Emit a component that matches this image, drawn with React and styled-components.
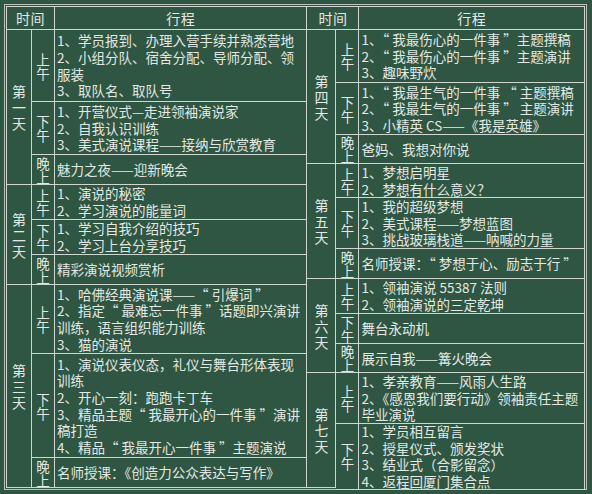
import React from 'react';
import styled, { createGlobalStyle } from 'styled-components';

const LINE = '#cfd6cf';
const INK = '#e3e8e2';

const GlobalStyle = createGlobalStyle`
  html, body {
    margin: 0;
    padding: 0;
    background: #2f5642;
  }
  body {
    font-family: "Noto Sans CJK SC", "Noto Sans", sans-serif;
    color: ${INK};
  }
`;

const Board = styled.div`
  width: 592px;
  height: 494px;
  box-sizing: border-box;
  padding: 4px 0 0 4px;
  background: #2f5642;
`;

const Frame = styled.div`
  display: flex;
  width: 583px;
  box-sizing: border-box;
  border: 1px solid #b9c3ba;
  padding: 1px;
`;

const Table = styled.div`
  display: flex;
  flex-direction: column;
  width: ${(p) => p.$width}px;
  border-top: 1px solid ${LINE};
  border-left: ${(p) => (p.$first ? `1px solid ${LINE}` : 'none')};
`;

const HeaderRow = styled.div`
  display: grid;
  grid-template-columns: ${(p) => p.$time}px 1fr;
  height: 23px;
`;

const HeaderCell = styled.div`
  display: flex;
  align-items: center;
  justify-content: center;
  box-sizing: border-box;
  border-right: 1px solid ${LINE};
  border-bottom: 1px solid ${LINE};
  font-size: 14px;
  line-height: 16px;
  letter-spacing: 0.5px;
`;

const DayBlock = styled.div`
  display: grid;
  grid-template-columns: ${(p) => p.$day}px 1fr;
`;

const DayCell = styled.div`
  display: flex;
  align-items: center;
  justify-content: center;
  box-sizing: border-box;
  border-right: 1px solid ${LINE};
  border-bottom: 1px solid ${LINE};
`;

const Vertical = styled.span`
  display: block;
  width: 1em;
  font-size: ${(p) => p.$size}px;
  line-height: ${(p) => p.$lh}px;
  text-align: center;
  word-break: break-all;
`;

const Periods = styled.div`
  display: flex;
  flex-direction: column;
`;

const PeriodRow = styled.div`
  display: grid;
  grid-template-columns: 23px 1fr;
  height: ${(p) => p.$h}px;
`;

const LabelCell = styled(DayCell)``;

const ContentCell = styled.div`
  display: flex;
  flex-direction: column;
  justify-content: center;
  box-sizing: border-box;
  padding: 0 0 0 2px;
  border-right: 1px solid ${LINE};
  border-bottom: 1px solid ${LINE};
  font-size: 13.5px;
  line-height: 16.6px;
`;

const Line = styled.div`
  white-space: pre;
`;

const left = [
  {
    day: '第一天',
    periods: [
      { label: '上午', h: 72, lines: ['1、学员报到、办理入营手续并熟悉营地', '2、小组分队、宿舍分配、导师分配、领\n服装', '3、取队名、取队号'] },
      { label: '下午', h: 53, lines: ['1、开营仪式—走进领袖演说家', '2、自我认识训练', '3、美式演说课程——接纳与欣赏教育'] },
      { label: '晚上', h: 30, lines: ['魅力之夜——迎新晚会'] },
    ],
  },
  {
    day: '第二天',
    periods: [
      { label: '上午', h: 35, lines: ['1、演说的秘密', '2、学习演说的能量词'] },
      { label: '下午', h: 35, lines: ['1、学习自我介绍的技巧', '2、学习上台分享技巧'] },
      { label: '晚上', h: 30, lines: ['精彩演说视频赏析'] },
    ],
  },
  {
    day: '第三天',
    periods: [
      { label: '上午', h: 69, lines: ['1、哈佛经典演说课——“ 引爆词 ”', '2、指定“ 最难忘一件事 ”话题即兴演讲\n训练，语言组织能力训练', '3、猫的演说'] },
      { label: '下午', h: 104, lines: ['1、演说仪表仪态，礼仪与舞台形体表现\n训练', '2、开心一刻：跑跑卡丁车', '3、精品主题“ 我最开心的一件事 ”演讲\n稿打造', '4、精品“ 我最开心一件事 ”主题演说'] },
      { label: '晚上', h: 30, lines: ['名师授课：《创造力公众表达与写作》'] },
    ],
  },
];

const right = [
  {
    day: '第四天',
    periods: [
      { label: '上午', h: 53, lines: ['1、“ 我最伤心的一件事 ”主题撰稿', '2、“ 我最伤心的一件事 ”主题演讲', '3、趣味野炊'] },
      { label: '下午', h: 52, lines: ['1、“ 我最生气的一件事 “ 主题撰稿', '2、“ 我最生气的一件事 ” 主题演讲', '3、小精英 CS——《我是英雄》'] },
      { label: '晚上', h: 29, lines: ['爸妈、我想对你说'] },
    ],
  },
  {
    day: '第五天',
    periods: [
      { label: '上午', h: 34, lines: ['1、梦想启明星', '2、梦想有什么意义？'] },
      { label: '下午', h: 51, lines: ['1、我的超级梦想', '2、美式课程——梦想蓝图', '3、挑战玻璃栈道——呐喊的力量'] },
      { label: '晚上', h: 30, lines: ['名师授课：“ 梦想于心、励志于行 ”'] },
    ],
  },
  {
    day: '第六天',
    periods: [
      { label: '上午', h: 35, lines: ['1、领袖演说 55387 法则', '2、领袖演说的三定乾坤'] },
      { label: '下午', h: 30, lines: ['舞台永动机'] },
      { label: '晚上', h: 29, lines: ['展示自我——篝火晚会'] },
    ],
  },
  {
    day: '第七天',
    periods: [
      { label: '上午', h: 50, lines: ['1、孝亲教育——风雨人生路', '2、《感恩我们要行动》领袖责任主题\n毕业演说'] },
      { label: '下午', h: 65, lines: ['1、学员相互留言', '2、授星仪式、颁发奖状', '3、结业式（合影留念）', '4、返程回厦门集合点'] },
    ],
  },
];

const Schedule = ({ days, width, dayWidth, first }) => (
  <Table $width={width} $first={first}>
    <HeaderRow $time={dayWidth + 23}>
      <HeaderCell>时间</HeaderCell>
      <HeaderCell>行程</HeaderCell>
    </HeaderRow>
    {days.map((d) => (
      <DayBlock key={d.day} $day={dayWidth}>
        <DayCell>
          <Vertical $size={14} $lh={16}>{d.day}</Vertical>
        </DayCell>
        <Periods>
          {d.periods.map((p) => (
            <PeriodRow key={p.label} $h={p.h}>
              <LabelCell>
                <Vertical $size={13.5} $lh={14}>{p.label}</Vertical>
              </LabelCell>
              <ContentCell>
                {p.lines.map((l) => (
                  <Line key={l}>{l}</Line>
                ))}
              </ContentCell>
            </PeriodRow>
          ))}
        </Periods>
      </DayBlock>
    ))}
  </Table>
);

export default function App() {
  return (
    <>
      <GlobalStyle />
      <Board>
        <Frame>
          <Schedule days={left} width={301} dayWidth={25} first />
          <Schedule days={right} width={278} dayWidth={29} />
        </Frame>
      </Board>
    </>
  );
}
